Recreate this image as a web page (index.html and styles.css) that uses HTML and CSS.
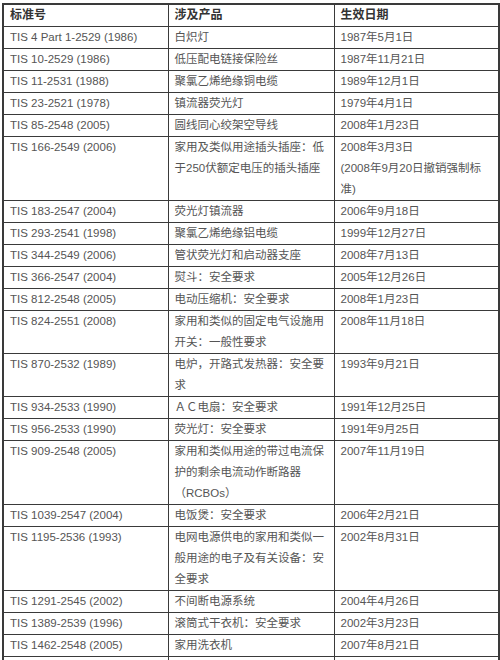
FILE: index.html
```html
<!DOCTYPE html>
<html lang="zh">
<head>
<meta charset="utf-8">
<title>TIS 标准</title>
<link rel="stylesheet" href="styles.css">
</head>
<body>
<table class="std">
  <colgroup>
    <col class="c1"><col class="c2"><col class="c3">
  </colgroup>
  <thead>
    <tr><th>标准号</th><th>涉及产品</th><th>生效日期</th></tr>
  </thead>
  <tbody>
    <tr><td>TIS 4 Part 1-2529 (1986)</td><td>白炽灯</td><td>1987年5月1日</td></tr>
    <tr><td>TIS 10-2529 (1986)</td><td>低压配电链接保险丝</td><td>1987年11月21日</td></tr>
    <tr><td>TIS 11-2531 (1988)</td><td>聚氯乙烯绝缘铜电缆</td><td>1989年12月1日</td></tr>
    <tr><td>TIS 23-2521 (1978)</td><td>镇流器荧光灯</td><td>1979年4月1日</td></tr>
    <tr><td>TIS 85-2548 (2005)</td><td>圆线同心绞架空导线</td><td>2008年1月23日</td></tr>
    <tr><td>TIS 166-2549 (2006)</td><td>家用及类似用途插头插座：低<br>于250伏额定电压的插头插座</td><td>2008年3月3日<br>(2008年9月20日撤销强制标<br>准)</td></tr>
    <tr><td>TIS 183-2547 (2004)</td><td>荧光灯镇流器</td><td>2006年9月18日</td></tr>
    <tr><td>TIS 293-2541 (1998)</td><td>聚氯乙烯绝缘铝电缆</td><td>1999年12月27日</td></tr>
    <tr><td>TIS 344-2549 (2006)</td><td>管状荧光灯和启动器支座</td><td>2008年7月13日</td></tr>
    <tr><td>TIS 366-2547 (2004)</td><td>熨斗：安全要求</td><td>2005年12月26日</td></tr>
    <tr><td>TIS 812-2548 (2005)</td><td>电动压缩机：安全要求</td><td>2008年1月23日</td></tr>
    <tr><td>TIS 824-2551 (2008)</td><td>家用和类似的固定电气设施用<br>开关：一般性要求</td><td>2008年11月18日</td></tr>
    <tr><td>TIS 870-2532 (1989)</td><td>电炉，开路式发热器：安全要<br>求</td><td>1993年9月21日</td></tr>
    <tr><td>TIS 934-2533 (1990)</td><td>ＡＣ电扇：安全要求</td><td>1991年12月25日</td></tr>
    <tr><td>TIS 956-2533 (1990)</td><td>荧光灯：安全要求</td><td>1991年9月25日</td></tr>
    <tr><td>TIS 909-2548 (2005)</td><td>家用和类似用途的带过电流保<br>护的剩余电流动作断路器<br>（RCBOs）</td><td>2007年11月19日</td></tr>
    <tr><td>TIS 1039-2547 (2004)</td><td>电饭煲：安全要求</td><td>2006年2月21日</td></tr>
    <tr><td>TIS 1195-2536 (1993)</td><td>电网电源供电的家用和类似一<br>般用途的电子及有关设备：安<br>全要求</td><td>2002年8月31日</td></tr>
    <tr><td>TIS 1291-2545 (2002)</td><td>不间断电源系统</td><td>2004年4月26日</td></tr>
    <tr><td>TIS 1389-2539 (1996)</td><td>滚筒式干衣机：安全要求</td><td>2002年3月23日</td></tr>
    <tr><td>TIS 1462-2548 (2005)</td><td>家用洗衣机</td><td>2007年8月21日</td></tr>
    <tr><td>&nbsp;</td><td>&nbsp;</td><td>&nbsp;</td></tr>
  </tbody>
</table>
</body>
</html>
```

FILE: styles.css
```css
html, body {
  margin: 0;
  padding: 0;
  background: #ffffff;
}

body {
  padding: 3px 0 0 2px;
  font-family: "Liberation Sans", "Noto Sans CJK SC", sans-serif;
  font-size: 11.5px;
  color: #555555;
}

.std {
  border-collapse: collapse;
  table-layout: fixed;
  width: 496px;
  border: 2px solid #3a3a3a;
}

.c1 { width: 165px; }
.c2 { width: 166px; }
.c3 { width: 165px; }

.std th,
.std td {
  border: 1px solid #3a3a3a;
  padding: 0 6px;
  line-height: 21px;
  text-align: left;
  vertical-align: top;
  white-space: nowrap;
  overflow: hidden;
}

.std th {
  font-weight: bold;
  font-size: 12px;
  color: #333333;
}
```
